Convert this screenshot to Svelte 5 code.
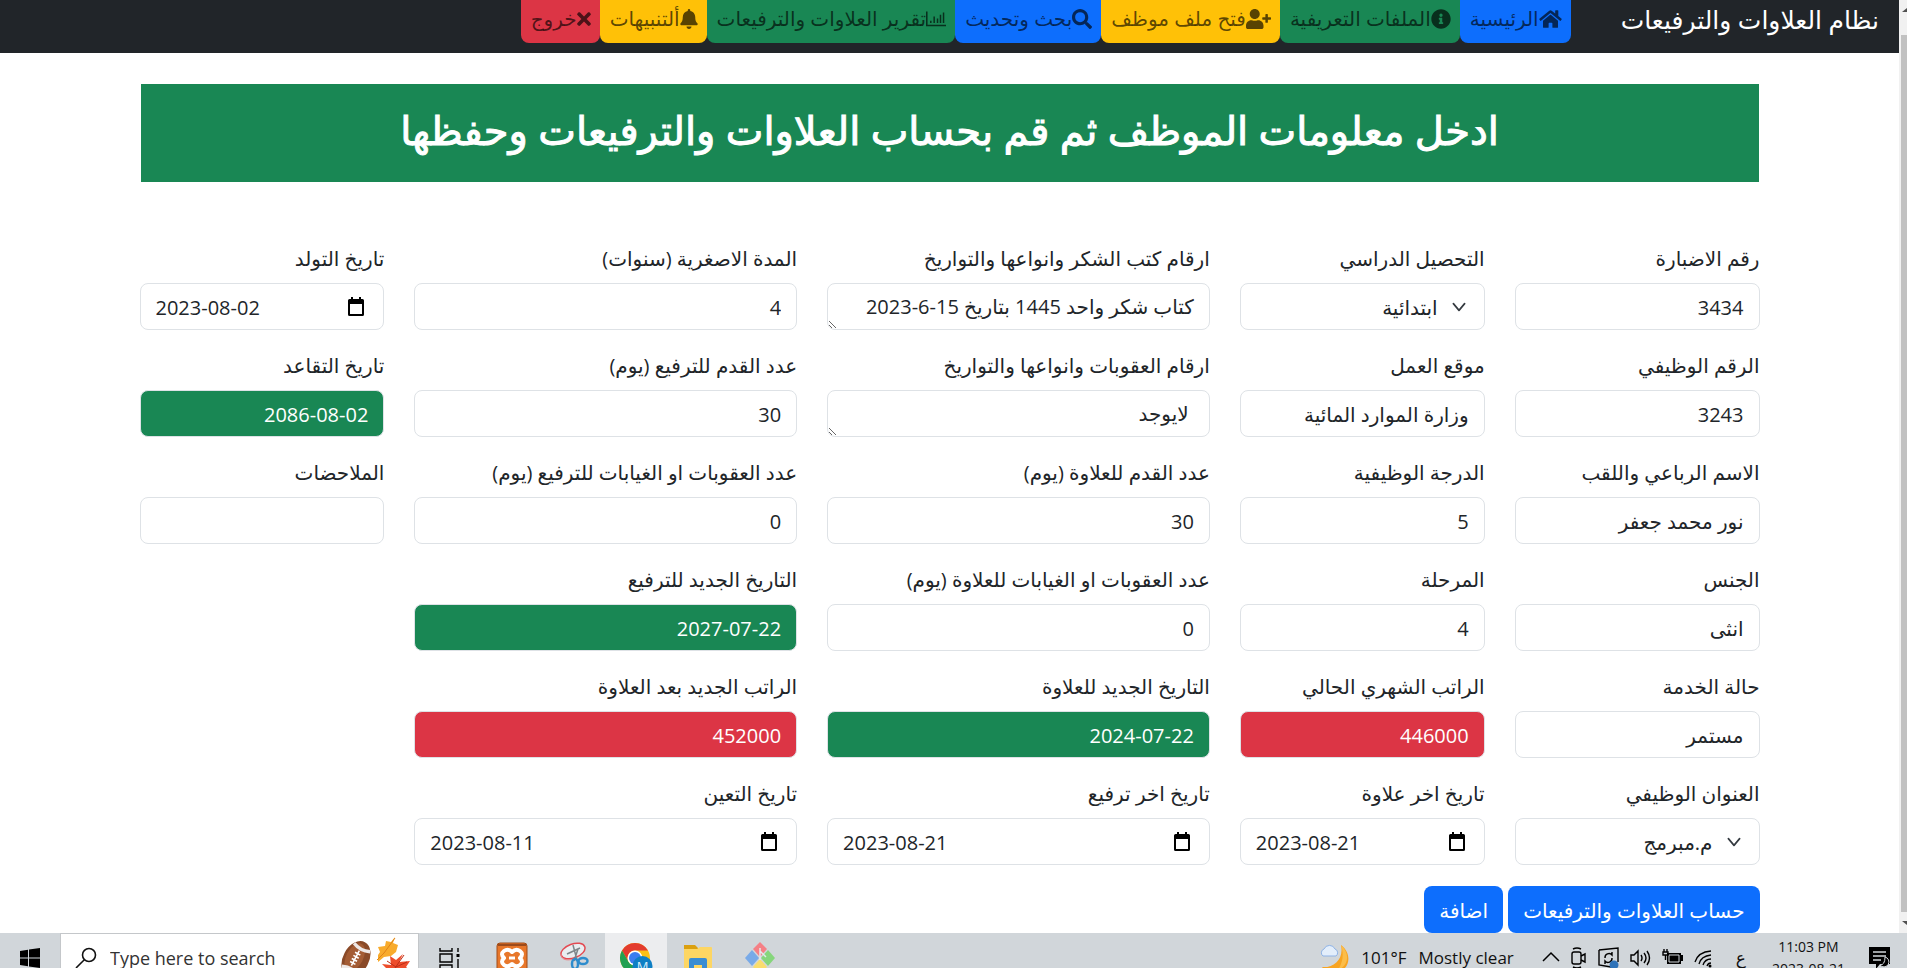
<script>
  const columns = [
    [
      { id: 'file-no', label: 'رقم الاضبارة', value: '3434' },
      { id: 'job-no', label: 'الرقم الوظيفي', value: '3243' },
      { id: 'full-name', label: 'الاسم الرباعي واللقب', value: 'نور محمد جعفر' },
      { id: 'gender', label: 'الجنس', value: 'انثى' },
      { id: 'service', label: 'حالة الخدمة', value: 'مستمر' },
      { id: 'title', label: 'العنوان الوظيفي', value: 'م.مبرمج', kind: 'select' }
    ],
    [
      { id: 'education', label: 'التحصيل الدراسي', value: 'ابتدائية', kind: 'select' },
      { id: 'workplace', label: 'موقع العمل', value: 'وزارة الموارد المائية' },
      { id: 'grade', label: 'الدرجة الوظيفية', value: '5' },
      { id: 'stage', label: 'المرحلة', value: '4' },
      { id: 'salary', label: 'الراتب الشهري الحالي', value: '446000', tone: 'danger' },
      { id: 'last-raise', label: 'تاريخ اخر علاوة', value: '2023-08-21', kind: 'date' }
    ],
    [
      { id: 'thanks', label: 'ارقام كتب الشكر وانواعها والتواريخ', value: 'كتاب شكر واحد 1445 بتاريخ 15-6-2023', kind: 'area' },
      { id: 'penalties', label: 'ارقام العقوبات وانواعها والتواريخ', value: ' لايوجد', kind: 'area' },
      { id: 'raise-seniority', label: 'عدد القدم للعلاوة (يوم)', value: '30' },
      { id: 'raise-absence', label: 'عدد العقوبات او الغيابات للعلاوة (يوم)', value: '0' },
      { id: 'next-raise', label: 'التاريخ الجديد للعلاوة', value: '2024-07-22', tone: 'success' },
      { id: 'last-promotion', label: 'تاريخ اخر ترفيع', value: '2023-08-21', kind: 'date' }
    ],
    [
      { id: 'min-period', label: 'المدة الاصغرية (سنوات)', value: '4' },
      { id: 'promo-seniority', label: 'عدد القدم للترفيع (يوم)', value: '30' },
      { id: 'promo-absence', label: 'عدد العقوبات او الغيابات للترفيع (يوم)', value: '0' },
      { id: 'next-promo', label: 'التاريخ الجديد للترفيع', value: '2027-07-22', tone: 'success' },
      { id: 'new-salary', label: 'الراتب الجديد بعد العلاوة', value: '452000', tone: 'danger' },
      { id: 'hired', label: 'تاريخ التعين', value: '2023-08-11', kind: 'date' }
    ],
    [
      { id: 'born', label: 'تاريخ التولد', value: '2023-08-02', kind: 'date' },
      { id: 'retire', label: 'تاريخ التقاعد', value: '2086-08-02', tone: 'success' },
      { id: 'notes', label: 'الملاحضات', value: '' }
    ]
  ];

  const nav = [
    { text: 'الرئيسية', tone: 'primary', w: 576, icon: 'M280 148 96 300v164a16 16 0 0 0 16 16h112a16 16 0 0 0 16-16v-96a16 16 0 0 1 16-16h64a16 16 0 0 1 16 16v96a16 16 0 0 0 16 16h112a16 16 0 0 0 16-16V300L296 148a12 12 0 0 0-16 0zM572 251l-84-69V44a12 12 0 0 0-12-12h-56a12 12 0 0 0-12 12v73l-90-74a48 48 0 0 0-61 0L4 251a12 12 0 0 0-1 17l25 31a12 12 0 0 0 17 2L280 107a12 12 0 0 1 16 0l235 194a12 12 0 0 0 17-2l25-31a12 12 0 0 0-1-17z' },
    { text: 'الملفات التعريفية', tone: 'success', w: 512, icon: 'M256 8C119 8 8 119 8 256s111 248 248 248 248-111 248-248S393 8 256 8zm0 110a42 42 0 1 1 0 84 42 42 0 0 1 0-84zm56 254c0 7-5 12-12 12h-88c-7 0-12-5-12-12v-24c0-7 5-12 12-12h12v-64h-12c-7 0-12-5-12-12v-24c0-7 5-12 12-12h64c7 0 12 5 12 12v100h12c7 0 12 5 12 12z' },
    { text: 'فتح ملف موظف', tone: 'warning', w: 640, icon: 'M624 208h-64v-64c0-9-7-16-16-16h-32c-9 0-16 7-16 16v64h-64c-9 0-16 7-16 16v32c0 9 7 16 16 16h64v64c0 9 7 16 16 16h32c9 0 16-7 16-16v-64h64c9 0 16-7 16-16v-32c0-9-7-16-16-16zM224 256c71 0 128-57 128-128S295 0 224 0 96 57 96 128s57 128 128 128zm90 32h-17c-46 21-100 21-146 0h-17C60 288 0 348 0 422v42c0 26 22 48 48 48h352c26 0 48-22 48-48v-42c0-74-60-134-134-134z' },
    { text: 'بحث وتحديث', tone: 'primary', w: 512, icon: 'M505 443 405 343c-4-4-11-7-17-7h-16c28-35 44-80 44-128C416 93 323 0 208 0S0 93 0 208s93 208 208 208c48 0 93-16 128-44v16c0 6 3 13 7 17l100 100c9 9 24 9 34 0l28-28c9-10 9-25 0-34zM208 336a128 128 0 1 1 0-256 128 128 0 0 1 0 256z' },
    { text: 'تقرير العلاوات والترفيعات', tone: 'success', w: 512, icon: 'M0 64h40v340h472v40H0zM104 300h38v60h-38zM190 190h38v170h-38zM276 240h38v120h-38zM352 150h38v210h-38zM430 90h38v270h-38z' },
    { text: 'ألتنبيهات', tone: 'warning', w: 448, icon: 'M224 512c35 0 64-29 64-64H160c0 35 29 64 64 64zm215-150c-19-21-55-52-55-154 0-78-54-140-128-155V32a32 32 0 1 0-64 0v21C118 68 64 130 64 208c0 102-36 133-55 154-6 7-9 14-9 22 0 16 13 32 32 32h384c19 0 32-16 32-32 0-8-3-15-9-22z' },
    { text: 'خروج', tone: 'danger', w: 352, icon: 'M243 256 343 156c12-12 12-32 0-44l-22-23c-13-12-32-12-45 0L176 189 76 89c-13-12-32-12-45 0L9 112c-12 12-12 32 0 44l100 100L9 356c-12 12-12 32 0 44l22 23c13 12 32 12 45 0l100-100 100 100c13 12 32 12 45 0l22-23c12-12 12-32 0-44z' }
  ];
</script>

<div class="screen">
  <div class="viewport">
    <div class="page" dir="rtl">
      <nav>
        <a class="brand" href="#home">نظام العلاوات والترفيعات</a>
        <div class="links">
          {#each nav as item}
            <a class={item.tone} href="#nav">
              <svg viewBox="0 0 {item.w} 512" height="20" width={Math.round((item.w / 512) * 20)} aria-hidden="true"><path d={item.icon} fill="currentColor" fill-rule="evenodd" /></svg>{item.text}
            </a>
          {/each}
        </div>
      </nav>

      <main>
        <h1>ادخل معلومات الموظف ثم قم بحساب العلاوات والترفيعات وحفظها</h1>
        <form onsubmit={(e) => e.preventDefault()}>
          <div class="columns">
            {#each columns as column}
              <div class="column">
                {#each column as field}
                  <div class="field">
                    <label for={field.id}>{field.label}</label>
                    {#if field.kind === 'select'}
                      <select class="control" id={field.id}><option>{field.value}</option></select>
                    {:else if field.kind === 'area'}
                      <textarea class="control" id={field.id} rows="1" value={field.value}></textarea>
                    {:else if field.kind === 'date'}
                      <div class="control date" dir="ltr">
                        <input id={field.id} type="text" value={field.value} />
                        <button type="button" aria-label={field.label}>
                          <svg viewBox="0 0 18 20" width="18" height="20"><path d="M1 3.500A1.500 1.500 0 0 1 2.500 2H4V0h2v2h6V0h2v2h1.500A1.500 1.500 0 0 1 17 3.500v14a1.500 1.500 0 0 1-1.500 1.500h-13A1.500 1.500 0 0 1 1 17.500zM3 7v10h12V7z" fill="#000" fill-rule="evenodd" /></svg>
                        </button>
                      </div>
                    {:else}
                      <input class="control {field.tone ?? ''}" id={field.id} type="text" value={field.value} />
                    {/if}
                  </div>
                {/each}
              </div>
            {/each}
          </div>
          <div class="actions">
            <button type="button">حساب العلاوات والترفيعات</button>
            <button type="submit">اضافة</button>
          </div>
        </form>
      </main>
    </div>
    <div class="scrollbar">
      <span class="arrow up"><svg width="6" height="6" viewBox="0 0 6 6"><path d="M1 4 6 0v4z" fill="#505050" /></svg></span>
      <span class="thumb"></span>
      <span class="arrow down"><svg width="6" height="6" viewBox="0 0 6 6"><path d="M1 1h5v4z" fill="#505050" /></svg></span>
    </div>
  </div>

  <footer>
    <div class="taskbar">
      <button class="tile start" aria-label="Start">
        <svg width="20" height="20" viewBox="0 0 20 20"><path d="M0 3l8-1.200v7.700H0zM9 1.600 20 0v9.500H9zM0 10.500h8v7.700L0 17zM9 10.500h11V20L9 18.400z" fill="#000" /></svg>
      </button>
      <label class="search">
        <svg width="22" height="22" viewBox="0 0 22 22" fill="none" stroke="#111" stroke-width="1.600"><circle cx="14" cy="8" r="6.500" /><path d="M9.300 12.700 1 21" /></svg>
        <input type="text" placeholder="Type here to search" aria-label="Search" />
        <svg width="72" height="44" viewBox="0 0 72 44">
          <g transform="rotate(-62 17 23)">
            <ellipse cx="17" cy="23" rx="19" ry="13" fill="#8a4a28" />
            <ellipse cx="18" cy="21" rx="15" ry="8.500" fill="#a45c34" />
            <path d="M4 14q4 9 0 18M30 14q-4 9 0 18" stroke="#eee8e6" stroke-width="3.500" fill="none" />
            <path d="M9 22h17M12 19v6M15.500 19v6M19 19v6M22.500 19v6" stroke="#fff" stroke-width="1.600" />
          </g>
          <path d="M56 1l-2 6 5 2-2 7-5 4-7 1-6 5 0-7 2-3-2-5 7-1 1-5 5 1z" fill="#f8ab2c" /><path d="M56 2 45 17l-7 7" stroke="#e08318" fill="none" />
          <path d="M64 18l-4 8 11-1-4 6 5 4-8 2 2 7-8-2-7 4-2-6-5-4 5-2-6-6 9 1-1-9 6 4z" fill="#ed4c2a" /><path d="M65 19 56 32l-4 9M57 31l11-5M57 31l-9-6" stroke="#bd2d17" fill="none" />
        </svg>
      </label>
      <button class="tile" aria-label="Task view">
        <svg width="22" height="20" viewBox="0 0 22 20" fill="none" stroke="#000" stroke-width="1.400"><path d="M1 0v3h12V0M1 20v-3h12v3M1 6h12v8H1zM19 0v4M19 11v9" /><path d="M17.500 6h3v3h-3z" fill="#000" stroke="none" /></svg>
      </button>
      <button class="tile" aria-label="XAMPP">
        <svg width="32" height="32" viewBox="0 0 32 32"><rect x="1" y="1" width="30" height="30" rx="3" fill="#e8772a" stroke="#a14c18" /><path d="M2 3h28" stroke="#9c4b1c" stroke-width="2" /><path d="M8 9q4-3 8 1 4-4 8-1t0 7q4 4 0 7t-8-1q-4 4-8 1t0-7q-4-4 0-7z" fill="none" stroke="#fff" stroke-width="4" stroke-linejoin="round" /><path d="M13 16h6" stroke="#fff" stroke-width="3" /></svg>
      </button>
      <button class="tile" aria-label="Snipping Tool">
        <svg width="32" height="32" viewBox="0 0 32 32" fill="none"><ellipse cx="15" cy="9" rx="12.500" ry="7" transform="rotate(-20 15 9)" fill="#e9edf0" stroke="#e34a52" stroke-width="1.500" /><path d="M3 12c0 7 8 7 16 4" stroke="#e98489" /><path d="M15 3l4 15M9 12l13-6M20 7l-4 12" stroke="#7d8589" stroke-width="1.500" /><ellipse cx="25" cy="19" rx="4.500" ry="3" stroke="#2d8ccd" stroke-width="2.500" /><ellipse cx="17" cy="22" rx="3" ry="5" stroke="#2d8ccd" stroke-width="2.500" /></svg>
      </button>
      <button class="tile active" aria-label="Chrome">
        <svg width="34" height="34" viewBox="0 0 34 34"><circle cx="16" cy="17" r="15" fill="#fbc116" /><path d="M3 9.500A15 15 0 0 1 29 9.500H16A7.500 7.500 0 0 0 9.500 20.700z" fill="#e33b2e" /><path d="M3 9.500a15 15 0 0 0 10.500 22.300L20 23.500a7.500 7.500 0 0 1-10.500-2.700z" fill="#22a052" /><circle cx="16" cy="17" r="7.500" fill="#fff" /><circle cx="16" cy="17" r="6" fill="#3a7df0" /><circle cx="23.500" cy="25" r="10" fill="#0f7fc4" /><text x="23.500" y="30" text-anchor="middle" font-size="13" fill="#d8eefa">M</text></svg>
      </button>
      <button class="tile" aria-label="File Explorer">
        <svg width="30" height="28" viewBox="0 0 30 28"><path d="M1 1h11l3 3v4H1z" fill="#dba010" /><path d="M1 5h13l3-2h11q1 0 1 1v24H1z" fill="#fdd663" /><path d="M6 28V16q0-2 2-2h14q2 0 2 2v12h-5v-7h-8v7z" fill="#3a8dd3" /></svg>
      </button>
      <button class="tile" aria-label="Git">
        <svg width="32" height="32" viewBox="0 0 32 32"><path d="M16 0l7 7-7 8-7-8z" fill="#f58086" /><path d="M8 8l7 8-7 8-7-8z" fill="#78aae8" /><path d="M24 8l7 8-7 8-7-8z" fill="#86d67c" /><path d="M16 17l7 8-7 7-7-7z" fill="#f9dd6e" /><path d="M16 6v12M16 9l6 6" stroke="#e4e9ec" stroke-width="1.500" /></svg>
      </button>

      <div class="tray">
        <a class="weather" href="#weather">
          <svg width="30" height="32" viewBox="0 0 30 32"><path d="M22 3c12 9 9 26-6 28-6 0-10-2-13-6 12 1 22-8 19-22z" fill="#f8a421" /><path d="M22 3c9 8 8 21-3 25 5-8 6-16 3-25z" fill="#fbbd49" /><path d="M4 14a4 4 0 0 1 1-7 6 6 0 0 1 11 0 4 4 0 0 1 1 7z" fill="#e3eefb" stroke="#8fb3e6" /></svg>
          <span>101°F</span><span>Mostly clear</span>
        </a>
        <div class="icons">
          <svg width="18" height="22" viewBox="0 0 18 22" fill="none" stroke="#000" stroke-width="1.500"><path d="M1 14l8-8 8 8" /></svg>
          <svg width="18" height="22" viewBox="0 0 18 22" fill="none" stroke="#000" stroke-width="1.400"><rect x="2" y="5" width="9" height="12" rx="2" /><path d="M11 9l4-2v8l-4-2M3 2q4-2 8 0M3 20q4 2 8 0" /></svg>
          <svg width="22" height="22" viewBox="0 0 22 22" fill="none" stroke="#000" stroke-width="1.400"><path d="M1 3l19-2v14M1 3v15l12 2" /><path d="M7 11a4 4 0 0 1 7-3V5M14 11a4 4 0 0 1-7 3v3" /><circle cx="16" cy="18" r="4.500" fill="#2d72b8" stroke="none" /></svg>
          <svg width="22" height="22" viewBox="0 0 22 22" fill="none" stroke="#000" stroke-width="1.400"><path d="M1 8v6h3l4 4V4L4 8zM11 8q2 3 0 6M14 6q4 5 0 10M17 4q5 7 0 14" /></svg>
          <svg width="22" height="22" viewBox="0 0 22 22"><path d="M5 6h14v2h2v6h-2v3H5z" /><path d="M7 8h10v7H7z" stroke="#d1d6da" fill="#000" /><path d="M2 2v3M5 2v3M1 5h5v3H1zM3.500 8v5" stroke="#000" fill="none" stroke-width="1.400" /></svg>
          <svg width="20" height="22" viewBox="0 0 20 22" fill="none" stroke="#000" stroke-width="1.300"><path d="M1 15Q4 5 17 4M5 17Q7 9 17 8M9 18Q11 12 17 12M13 19q1-3 4-3" /><circle cx="16" cy="19" r="1.500" fill="#000" stroke="none" /></svg>
        </div>
        <span class="lang">ع</span>
        <div class="clock"><span>11:03 PM</span><span>2023-08-21</span></div>
        <button class="notify" aria-label="Notifications">
          <svg width="22" height="24" viewBox="0 0 22 24"><path d="M0 1h21v17H11l-4 5v-5H0z" /><path d="M4 6h13M4 10h13M4 14h8" stroke="#d1d6da" stroke-width="1.500" /><path d="M16 11a5 5 0 1 1-5 8q5 0 5-8z" fill="#000" stroke="#d1d6da" /></svg>
        </button>
      </div>
    </div>
  </footer>
</div>

<style>
  :global(body) { margin: 0; overflow: hidden; }
  * { box-sizing: border-box; }
  .screen { display: flex; flex-direction: column; height: 100vh; font-family: "Open Sans", "DejaVu Sans", sans-serif; font-size: 20px; line-height: 30px; color: #212529; background: #fff; }
  button, input, select, textarea { font: inherit; color: inherit; }
  .viewport { flex: 1; min-height: 0; display: flex; overflow: hidden; }
  .page { flex: 1; min-width: 0; overflow: hidden; }
  .scrollbar { width: 8px; flex: none; display: flex; flex-direction: column; background: #f1f1f1; padding-left: 2px; }
  .scrollbar .thumb { flex: 1; background: #c1c1c1; }
  .arrow { height: 35px; display: flex; padding-top: 8px; }
  .arrow.down { height: 21px; }

  nav { display: flex; height: 53px; padding: 0 20px; background: #212529; }
  .brand { color: #fff; font-size: 25px; line-height: 38px; text-decoration: none; margin-left: 50px; white-space: nowrap; }
  .links { display: flex; }
  .links a { display: flex; align-items: center; height: 43px; padding: 3px 9px 8px 10px; border-radius: 0 0 8px 8px; color: rgba(0, 0, 0, 0.65); text-decoration: none; white-space: nowrap; line-height: 32px; }
  .primary { background: #0d6efd; }
  .success { background: #198754; }
  .warning { background: #ffc107; }
  .danger { background: #dc3545; }

  main { max-width: 1650px; margin: 0 auto; padding: 31px 15px 0; }
  h1 { margin: 0 1px 61px; height: 98px; line-height: 92px; font-size: 40px; font-weight: 400; -webkit-text-stroke: 1px #fff; color: #fff; background: #198754; text-align: center; white-space: nowrap; }
  .columns { display: grid; grid-template-columns: 245fr 245fr 383fr 383fr 245fr; gap: 30px; align-items: start; }
  .column { display: grid; gap: 20px; min-width: 0; }
  .field { display: grid; gap: 10px; min-width: 0; }
  .field label { height: 30px; line-height: 32px; white-space: nowrap; }
  .control { width: 100%; min-width: 0; height: 47px; padding: 8px 15px 6px; border: 1px solid #dee2e6; border-radius: 8px; background-color: #fff; outline: 0; }
  .control.success { background-color: #198754; color: #fff; }
  .control.danger { background-color: #dc3545; color: #fff; }
  textarea { resize: vertical; display: block; overflow: hidden; }
  select { appearance: none; background-image: url("data:image/svg+xml,%3Csvg xmlns='http://www.w3.org/2000/svg' viewBox='0 0 16 16'%3E%3Cpath fill='none' stroke='%23343a40' stroke-linecap='round' stroke-linejoin='round' stroke-width='1.500' d='m3 5 5 6 5-6'/%3E%3C/svg%3E"); background-repeat: no-repeat; background-position: right 16px center; background-size: 18px; }
  select.control { padding: 2px 46px 0 15px; }
  .date { display: flex; align-items: center; padding: 0 18px 0 15px; }
  .date input { flex: 1; min-width: 0; height: 45px; border: 0; padding: 2px 0 0; outline: 0; background: none; }
  .date button { border: 0; padding: 0; background: none; display: flex; }
  .actions { display: flex; gap: 5px; margin-top: 21px; }
  .actions button { height: 47px; padding: 2px 15px 0; border: 0; border-radius: 8px; background: #0d6efd; color: #fff; white-space: nowrap; }

  footer { height: 35px; flex: none; overflow: hidden; background: #d1d6da; color: #111; }
  .taskbar { display: flex; height: 50px; }
  .tile { width: 62px; flex: none; border: 0; padding: 0; background: none; display: flex; align-items: center; justify-content: center; }
  .tile.start { width: 60px; }
  .tile.active { background: #ecedef; }
  .search { width: 359px; display: flex; align-items: center; gap: 13px; padding: 0 7px 0 14px; background: #fff; border: 1px solid #c4c7ca; }
  .search input { flex: 1; min-width: 0; border: 0; outline: 0; padding: 0; font-size: 18px; }
  .search input::placeholder { color: #333; }
  .tray { margin-left: auto; display: flex; align-items: center; padding-right: 16px; font-size: 17px; }
  .weather { display: flex; align-items: center; gap: 12px; color: inherit; text-decoration: none; margin-right: 28px; white-space: nowrap; }
  .icons { display: flex; align-items: center; gap: 10px; }
  .lang { margin: 0 26px 0 22px; }
  .clock { display: flex; flex-direction: column; align-items: center; font-size: 14px; line-height: 22px; margin-right: 24px; }
  .notify { border: 0; padding: 0; background: none; display: flex; }
</style>
